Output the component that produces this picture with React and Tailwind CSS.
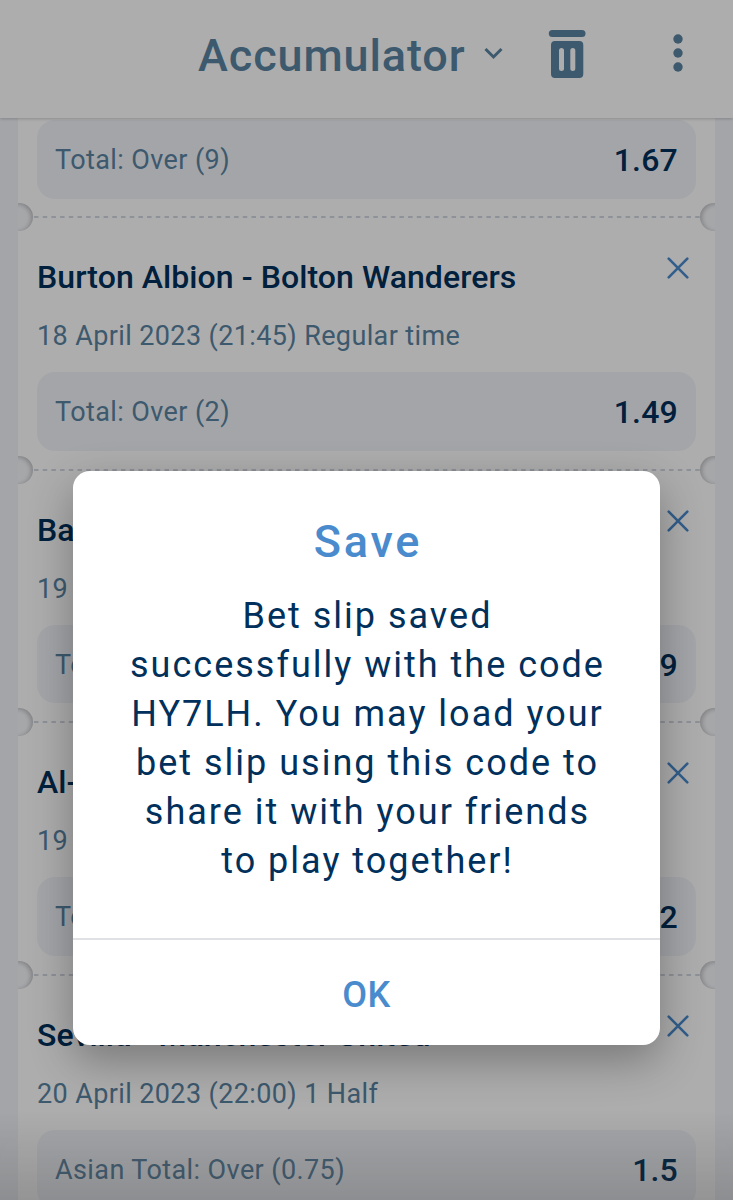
const bets = [
  { title: 'Burton Albion - Bolton Wanderers', date: '18 April 2023 (21:45) Regular time', market: 'Total: Over (2)', odds: '1.49' },
  { title: 'Bayern', date: '19 April', market: 'Total', odds: '1.29' },
  { title: 'Al-Hilal', date: '19 April', market: 'Total', odds: '1.32' },
  { title: 'Sevilla - Manchester United', date: '20 April 2023 (22:00) 1 Half', market: 'Asian Total: Over (0.75)', odds: '1.5' },
];

function Header() {
  return (
    <header className="relative z-10 flex h-[118px] shrink-0 items-center bg-white pl-[198px] text-[#5b84a2] shadow-[0_1px_3px_rgba(0,0,0,0.2)]">
      <h1 className="-mt-[7px] w-[268px] whitespace-nowrap text-[45px] font-medium leading-none tracking-[0.9px]">Accumulator</h1>
      <svg className="-mt-[11px] ml-[18px]" width="20" height="14" viewBox="0 0 20 14" fill="none" stroke="currentColor" strokeWidth="3">
        <path d="M1.500 2 9.500 10 17.500 2" />
      </svg>
      <svg className="-mt-[10px] ml-[44px]" width="38" height="50" viewBox="0 0 38 50" fill="currentColor">
        <rect x="0.800" y="1" width="36.700" height="7" rx="3.5" />
        <path
          fillRule="evenodd"
          d="M7 12H31.300Q35.300 12 35.300 16V45Q35.300 49 31.300 49H7Q3 49 3 45V16Q3 12 7 12ZM13.500 19Q11 19 11 21.500V39.500Q11 42 13.500 42T16 39.500V21.500Q16 19 13.500 19ZM24.800 19Q22.300 19 22.300 21.500V39.500Q22.300 42 24.800 42T27.300 39.500V21.500Q27.300 19 24.800 19Z"
        />
      </svg>
      <svg className="-mt-[13px] ml-[87px]" width="10" height="38" viewBox="0 0 10 38" fill="currentColor">
        <circle cx="5" cy="5" r="4.700" />
        <circle cx="5" cy="19" r="4.700" />
        <circle cx="5" cy="33" r="4.700" />
      </svg>
    </header>
  );
}

function Market({ market, odds }) {
  return (
    <div className="flex h-[78.500px] items-center justify-between rounded-[18px] bg-[#f2f4f9] px-[18px] pt-[2px]">
      <span className="text-[27px] tracking-[0.400px] text-[#5b84a2]">{market}</span>
      <span className="text-[32px] font-medium tracking-[0.200px] text-[#00305b]">{odds}</span>
    </div>
  );
}

function Divider() {
  return (
    <div className="-mx-[19px] flex h-7 items-center justify-between overflow-hidden">
      <div className="-ml-[13px] h-7 w-7 shrink-0 rounded-full bg-[#f5f6fa] shadow-[inset_-2px_1px_4px_rgba(0,0,0,0.22)]"></div>
      <svg className="h-[2px] grow" fill="none">
        <line x1="1" y1="1" x2="100%" y2="1" stroke="#d0d6e0" strokeWidth="2" strokeDasharray="4.5 4.200" />
      </svg>
      <div className="-mr-[13px] h-7 w-7 shrink-0 rounded-full bg-[#f5f6fa] shadow-[inset_2px_1px_4px_rgba(0,0,0,0.22)]"></div>
    </div>
  );
}

function Bet({ title, date, market, odds }) {
  return (
    <div className="h-[252.600px] shrink-0">
      <Divider />
      <div className="flex h-[141px] flex-col pt-[26px]">
        <div className="flex h-[40px] items-center justify-between">
          <h2 className="whitespace-nowrap text-[32px] font-medium leading-10 tracking-[0.070px] text-[#00305b]">{title}</h2>
          <svg className="-mt-[18px] mr-[7px]" width="22" height="22" viewBox="0 0 22 22" fill="none" stroke="#4a8bcd" strokeWidth="2.600" strokeLinecap="round">
            <path d="M1.700 1.700 20.300 20.300M20.300 1.700 1.700 20.300" />
          </svg>
        </div>
        <p className="mt-[21px] whitespace-nowrap text-[27px] leading-9 tracking-[0.380px] text-[#5b84a2]">{date}</p>
      </div>
      <Market market={market} odds={odds} />
    </div>
  );
}

function SaveDialog() {
  return (
    <div role="dialog" className="absolute left-[73px] top-[471px] flex h-[574px] w-[587px] flex-col rounded-[17px] bg-white text-center shadow-[0_16px_44px_rgba(0,0,0,0.3)]">
      <h3 className="mt-[44px] pl-[3px] text-[45px] font-medium leading-[54px] tracking-[2.800px] text-[#4a8bcd]">Save</h3>
      <p className="mt-[23px] whitespace-nowrap pl-[2px] text-[36px] leading-[49px] tracking-[2px] text-[#00305b]">
        Bet slip saved<br />
        successfully with the code<br />
        HY7LH. You may load your<br />
        bet slip using this code to<br />
        share it with your friends<br />
        to play together!
      </p>
      <button className="mt-auto h-[107px] border-t-2 border-[#dfe1e5] pt-[4px] text-[36px] font-medium tracking-[0.500px] text-[#4a8bcd]">OK</button>
    </div>
  );
}

export default function App() {
  return (
    <div className="relative flex h-[1200px] w-[733px] flex-col overflow-hidden bg-[#f2f4f9] font-['Roboto',sans-serif]">
      <Header />
      <main className="mx-[18px] flex flex-col bg-white px-[19px] pt-[2px]">
        <div className="h-[83px] shrink-0">
          <Market market="Total: Over (9)" odds="1.67" />
        </div>
        {bets.map((bet) => (
          <Bet key={bet.title} {...bet} />
        ))}
      </main>
      {/* fade of the bottom sheet */}
      <div className="absolute inset-x-0 bottom-0 h-[90px] bg-gradient-to-b from-transparent to-black/15"></div>
      <div className="absolute inset-x-0 bottom-0 h-[62px] rounded-t-[24px] bg-white/6"></div>
      <div className="absolute inset-0 z-20 bg-black/32">
        <SaveDialog />
      </div>
    </div>
  );
}
